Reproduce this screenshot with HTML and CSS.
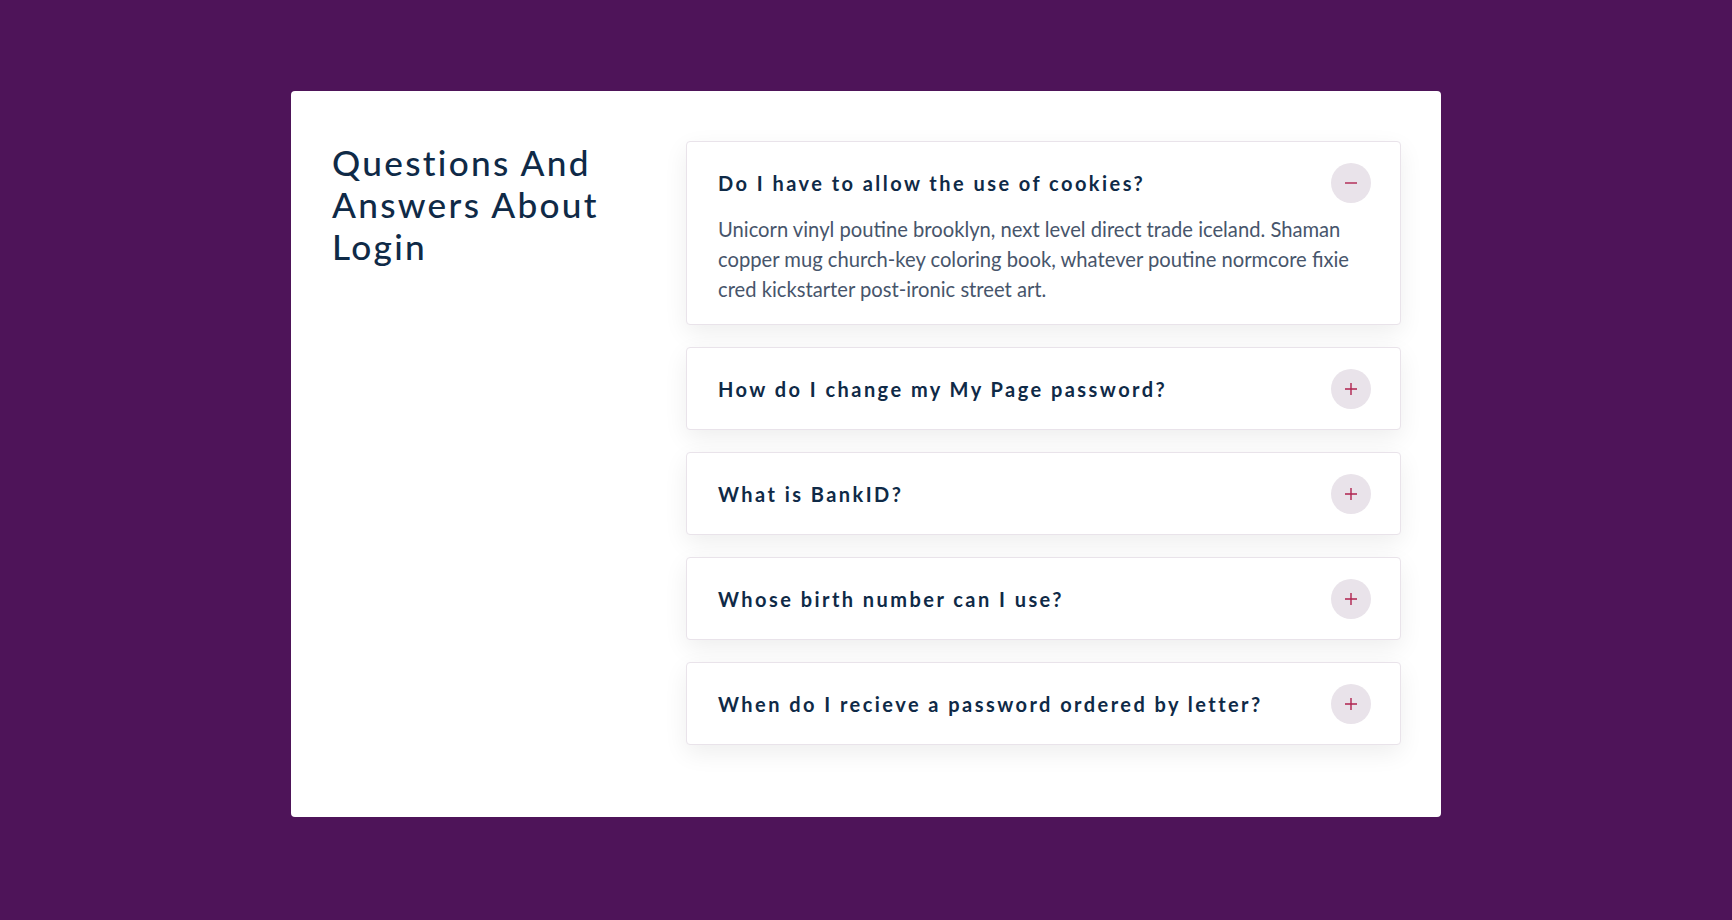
FILE: index.html
```html
<!DOCTYPE html>
<html lang="en">
<head>
<meta charset="utf-8">
<title>Questions And Answers About Login</title>
<link rel="stylesheet" href="styles.css">
</head>
<body>
<main class="card">
  <h1 class="title">Questions And Answers About Login</h1>
  <section class="faq">
    <div class="item open">
      <div class="head">
        <h3 class="q">Do I have to allow the use of cookies?</h3>
        <span class="toggle"><svg viewBox="0 0 14 14" width="14" height="14"><path d="M1 7h12" stroke="currentColor" stroke-width="1.4" fill="none"/></svg></span>
      </div>
      <p class="a">Unicorn vinyl poutine brooklyn, next level direct trade iceland. Shaman copper mug church-key coloring book, whatever poutine normcore fixie cred kickstarter post-ironic street art.</p>
    </div>
    <div class="item">
      <div class="head">
        <h3 class="q">How do I change my My Page password?</h3>
        <span class="toggle"><svg viewBox="0 0 14 14" width="14" height="14"><path d="M1 7h12M7 1v12" stroke="currentColor" stroke-width="1.4" fill="none"/></svg></span>
      </div>
    </div>
    <div class="item">
      <div class="head">
        <h3 class="q">What is BankID?</h3>
        <span class="toggle"><svg viewBox="0 0 14 14" width="14" height="14"><path d="M1 7h12M7 1v12" stroke="currentColor" stroke-width="1.4" fill="none"/></svg></span>
      </div>
    </div>
    <div class="item">
      <div class="head">
        <h3 class="q">Whose birth number can I use?</h3>
        <span class="toggle"><svg viewBox="0 0 14 14" width="14" height="14"><path d="M1 7h12M7 1v12" stroke="currentColor" stroke-width="1.4" fill="none"/></svg></span>
      </div>
    </div>
    <div class="item">
      <div class="head">
        <h3 class="q">When do I recieve a password ordered by letter?</h3>
        <span class="toggle"><svg viewBox="0 0 14 14" width="14" height="14"><path d="M1 7h12M7 1v12" stroke="currentColor" stroke-width="1.4" fill="none"/></svg></span>
      </div>
    </div>
  </section>
</main>
</body>
</html>
```

FILE: styles.css
```css
* { box-sizing: border-box; }
html, body { margin: 0; padding: 0; }
body {
  background: #4e1459;
  font-family: Lato, "Open Sans", sans-serif;
  min-height: 920px;
  padding-top: 91px;
}
.card {
  width: 1150px;
  margin: 0 auto;
  background: #fff;
  border-radius: 4px;
  padding: 50px 40px 50px 41px;
  display: grid;
  grid-template-columns: 1fr 715px;
  column-gap: 40px;
  align-items: start;
}
.title {
  margin: 0;
  font-size: 35.2px;
  line-height: 42.2px;
  font-weight: 500;
  letter-spacing: 2.3px;
  color: #0f2a47;
  max-width: 300px;
}
.faq { display: flex; flex-direction: column; }
.item {
  background: #fff;
  border: 1px solid #e9e3ea;
  border-radius: 4px;
  box-shadow: 0 8px 24px rgba(0, 0, 0, 0.07);
  margin-bottom: 22px;
}
.head {
  display: flex;
  align-items: center;
  justify-content: space-between;
  padding: 20.5px 29px 20.5px 31px;
}
.open .head { padding-bottom: 11.5px; }
.q {
  margin: 0;
  font-size: 20px;
  font-weight: 700;
  letter-spacing: 2.45px;
  color: #0f2a47;
}
.toggle {
  width: 40px;
  height: 40px;
  border-radius: 50%;
  background: #e9e3ea;
  color: #b0234f;
  display: flex;
  align-items: center;
  justify-content: center;
  flex-shrink: 0;
}
.a {
  margin: 0;
  padding: 0 30px 20px 31px;
  font-size: 20.2px;
  line-height: 30px;
  color: #47556b;
}
```
